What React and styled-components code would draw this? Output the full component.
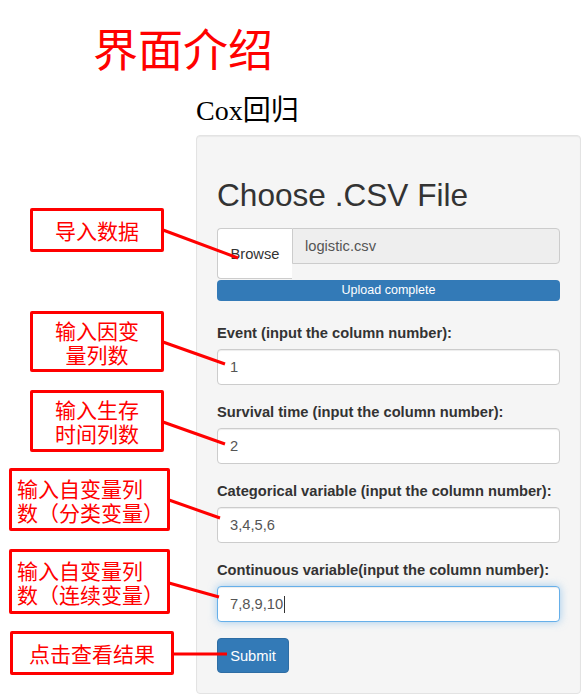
import styled, { createGlobalStyle } from 'styled-components'

const GlobalStyle = createGlobalStyle`
    html, body {
        margin: 0;
        padding: 0;
        background: #fff;
    }
    body {
        font-family: "Liberation Sans", Arial, sans-serif;
        font-size: 14.7px;
        color: #333;
    }
    * {
        box-sizing: border-box;
    }
`

const callouts = [
    { lines: ['导入数据'], left: 30, top: 208, width: 134, height: 44 },
    { lines: ['输入因变', '量列数'], left: 30, top: 311, width: 134, height: 61 },
    { lines: ['输入生存', '时间列数'], left: 30, top: 390, width: 134, height: 62 },
    { lines: ['输入自变量列', '数（分类变量）'], left: 9, top: 468, width: 161, height: 63, align: 'left' },
    { lines: ['输入自变量列', '数（连续变量）'], left: 9, top: 549, width: 161, height: 65, align: 'left' },
    { lines: ['点击查看结果'], left: 10, top: 631, width: 164, height: 44 },
]

// connector lines, from a callout's right edge to the field it points at
const connectors = [
    [163, 230, 238, 258],
    [163, 342, 225, 364],
    [163, 422, 225, 444],
    [169, 500, 220, 518],
    [169, 583, 219, 597],
    [173, 654, 227, 654],
]

const fields = [
    { label: 'Event (input the column number):', value: '1' },
    { label: 'Survival time (input the column number):', value: '2' },
    { label: 'Categorical variable (input the column number):', value: '3,4,5,6' },
    { label: 'Continuous variable(input the column number):', value: '7,8,9,10', focused: true },
]

const Page = styled.div`
    position: relative;
    width: 585px;
    height: 698px;
    overflow: hidden;
`

const Title = styled.h1`
    margin: 0;
    padding: 23px 0 0 93px;
    font-family: "Noto Sans CJK SC", sans-serif;
    font-size: 45px;
    font-weight: 400;
    line-height: 50px;
    color: #ff0000;
`

const Subtitle = styled.h2`
    margin: 22px 0 0 196px;
    font-family: "Liberation Serif", "Noto Sans CJK SC", serif;
    font-size: 28px;
    font-weight: 400;
    line-height: 32px;
    color: #000;
`

const Body = styled.div`
    display: flex;
    margin-top: 8px;
`

const Gutter = styled.div`
    width: 196px;
    flex: none;
`

const Well = styled.div`
    width: 385px;
    height: 559px;
    padding: 20px;
    background: #f5f5f5;
    border: 1px solid #e3e3e3;
    border-radius: 4px;
    box-shadow: inset 0 1px 1px rgba(0, 0, 0, 0.05);
    display: flex;
    flex-direction: column;
`

const Heading = styled.h3`
    margin: 22px 0 16px;
    font-family: "Liberation Sans", Arial, sans-serif;
    font-size: 31.6px;
    font-weight: 400;
    line-height: 34px;
    color: #333;
`

const InputGroup = styled.div`
    display: flex;
    align-items: flex-start;
`

const BrowseButton = styled.span`
    width: 75px;
    height: 51px;
    flex: none;
    display: flex;
    align-items: center;
    justify-content: center;
    background: #fff;
    border: 1px solid #ccc;
    border-right: none;
    border-radius: 4px 0 0 4px;
    color: #333;
`

const FileName = styled.div`
    flex: 1;
    height: 36px;
    padding: 0 12px;
    display: flex;
    align-items: center;
    background: #eee;
    border: 1px solid #ccc;
    border-radius: 0 4px 4px 0;
    color: #555;
`

const Progress = styled.div`
    margin-top: 1px;
    height: 21px;
    border-radius: 4px;
    background: #337ab7;
    color: #fff;
    font-size: 12.5px;
    line-height: 21px;
    text-align: center;
`

const Fields = styled.div`
    margin-top: 22px;
    display: flex;
    flex-direction: column;
    gap: 17px;
`

const Group = styled.div`
    display: flex;
    flex-direction: column;
`

const Label = styled.label`
    font-weight: 700;
    line-height: 20px;
    margin-bottom: 6px;
    white-space: nowrap;
`

const Field = styled.div`
    height: 36px;
    padding: 0 12px;
    display: flex;
    align-items: center;
    background: #fff;
    border: 1px solid ${({ focused }) => (focused ? '#66afe9' : '#ccc')};
    border-radius: 4px;
    color: #555;
    box-shadow: ${({ focused }) =>
        focused
            ? 'inset 0 1px 1px rgba(0,0,0,.075), 0 0 8px rgba(102,175,233,.6)'
            : 'inset 0 1px 1px rgba(0,0,0,.075)'};
`

const Caret = styled.span`
    display: inline-block;
    width: 1px;
    height: 17px;
    margin-left: 1px;
    background: #333;
`

const SubmitButton = styled.button`
    align-self: flex-start;
    margin-top: 16px;
    width: 72px;
    height: 35px;
    padding: 0;
    background: #337ab7;
    border: 1px solid #2e6da4;
    border-radius: 4px;
    color: #fff;
    font-family: "Liberation Sans", Arial, sans-serif;
    font-size: 14.7px;
`

const Callout = styled.div`
    position: absolute;
    left: ${({ left }) => left}px;
    top: ${({ top }) => top}px;
    width: ${({ width }) => width}px;
    height: ${({ height }) => height}px;
    display: flex;
    flex-direction: column;
    justify-content: center;
    align-items: ${({ align }) => (align === 'left' ? 'flex-start' : 'center')};
    padding-left: ${({ align }) => (align === 'left' ? '5px' : '0')};
    background: #fff;
    border: 3px solid #ff0000;
    border-radius: 2px;
    font-family: "Noto Sans CJK SC", sans-serif;
    font-size: 21px;
    color: #ff0000;
    white-space: nowrap;
    z-index: 2;
`

const CalloutLine = styled.div`
    height: 24px;
    line-height: 24px;
`

const Connectors = styled.svg`
    position: absolute;
    left: 0;
    top: 0;
    pointer-events: none;
    z-index: 3;
`

export default function App() {
    return (
        <Page>
            <GlobalStyle />
            <Title>界面介绍</Title>
            <Subtitle>Cox回归</Subtitle>
            <Body>
                <Gutter />
                <Well>
                    <Heading>Choose .CSV File</Heading>
                    <InputGroup>
                        <BrowseButton>Browse</BrowseButton>
                        <FileName>logistic.csv</FileName>
                    </InputGroup>
                    <Progress>Upload complete</Progress>
                    <Fields>
                        {fields.map((f) => (
                            <Group key={f.label}>
                                <Label>{f.label}</Label>
                                <Field focused={f.focused}>
                                    {f.value}
                                    {f.focused && <Caret />}
                                </Field>
                            </Group>
                        ))}
                    </Fields>
                    <SubmitButton>Submit</SubmitButton>
                </Well>
            </Body>

            {callouts.map((c) => (
                <Callout key={c.lines[0] + c.top} {...c}>
                    {c.lines.map((l) => (
                        <CalloutLine key={l}>{l}</CalloutLine>
                    ))}
                </Callout>
            ))}
            <Connectors width="585" height="698" viewBox="0 0 585 698">
                {connectors.map(([x1, y1, x2, y2]) => (
                    <line key={y1} x1={x1} y1={y1} x2={x2} y2={y2} stroke="#ff0000" strokeWidth="3" />
                ))}
            </Connectors>
        </Page>
    )
}
